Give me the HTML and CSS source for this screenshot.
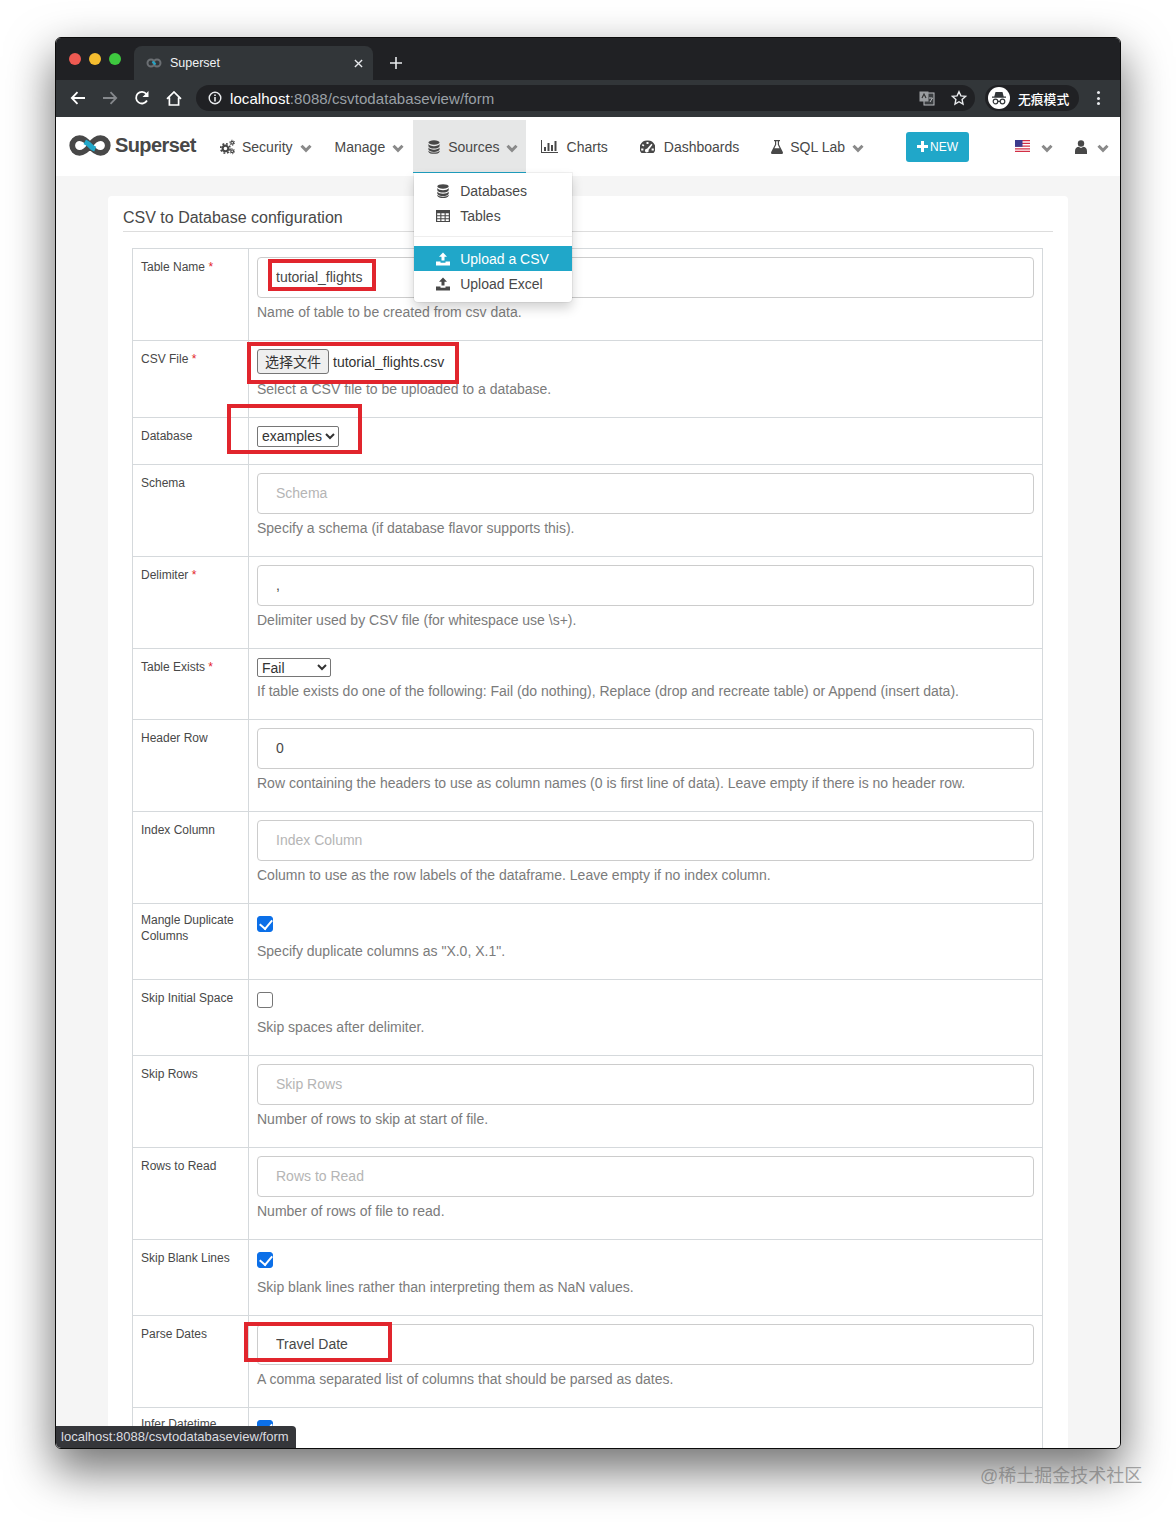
FILE: index.html
```html
<!DOCTYPE html>
<html lang="en">
<head>
<meta charset="utf-8">
<title>Superset</title>
<link rel="stylesheet" href="styles.css">
</head>
<body>
<svg class="defs" aria-hidden="true">
  <symbol id="i-db" viewBox="0 0 14 16"><ellipse cx="7" cy="2.8" rx="6.5" ry="2.6"/><path d="M.5 4.6C1.5 6.4 4 7 7 7s5.500-.6 6.500-2.400V7c-.6 1.800-3.400 2.700-6.500 2.700S1.100 8.800.5 7zM.5 8.700c1 1.800 3.500 2.400 6.500 2.400s5.500-.6 6.500-2.400v2.300c-.6 1.800-3.400 2.700-6.500 2.700S1.100 12.800.5 11z"/><path d="M.5 12.400c1 1.500 3.500 2.100 6.500 2.100s5.500-.6 6.500-2.100v1c-.6 1.700-3.400 2.600-6.500 2.600S1.100 15.100.5 13.400z"/></symbol>
  <symbol id="i-cogs" viewBox="0 0 16 16"><g fill="none" stroke="currentColor"><circle cx="5.800" cy="9.500" r="3" stroke-width="2.200"/><circle cx="5.800" cy="9.500" r="5" stroke-width="1.800" stroke-dasharray="2 1.930"/><circle cx="13" cy="3.500" r="1.500" stroke-width="1.300"/><circle cx="13" cy="3.500" r="2.700" stroke-width="1" stroke-dasharray="1.400 1.430"/><circle cx="13" cy="12.500" r="1.500" stroke-width="1.300"/><circle cx="13" cy="12.500" r="2.700" stroke-width="1" stroke-dasharray="1.400 1.430"/></g></symbol>
  <symbol id="i-chart" viewBox="0 0 17 13"><path d="M0 0h1v12h16v1H0z"/><path d="M3 7h2v4H3zM6.500 3h2v8h-2zM10 5h2v6h-2zM13.500 1h2v10h-2z"/></symbol>
  <symbol id="i-gauge" viewBox="0 0 15 13"><path fill-rule="evenodd" d="M7.500 0a7.500 7.500 0 0 1 6 12.500H1.500A7.500 7.500 0 0 1 7.500 0zM6.500 1.500v2h2v-2zM2.800 3.500l-1 1.300 1.500 1.300 1.100-1.300zM11.400 3.200 7 8.300a1.800 1.800 0 1 0 1.500 1.200l4-5.300zM1.200 8v2h2.200V8zM11.600 8v2h2.200V8z"/></symbol>
  <symbol id="i-flask" viewBox="0 0 12 14"><path d="M3 0h6v1.200H8v3.300l3.800 7.500c.4.900-.1 2-1.200 2H1.400C.3 14-.2 12.900.2 12L4 4.500V1.200H3zM5.200 1.200v3.600L3.400 8.300h5.200L6.800 4.800V1.200z" fill-rule="evenodd"/></symbol>
  <symbol id="i-user" viewBox="0 0 12 14"><circle cx="6" cy="3.500" r="3.200"/><path d="M3.500 6.800 6 8l2.500-1.200C10.800 7.300 12 8.800 12 11.300V14H0v-2.700c0-2.500 1.200-4 3.500-4.500z"/></symbol>
  <symbol id="i-table" viewBox="0 0 14 12"><path fill-rule="evenodd" d="M0 0h14v12H0zM1.200 3.300v2h3.100v-2zM5.400 3.300v2h3.200v-2zM9.700 3.300v2h3.100v-2zM1.200 6.300v2h3.100v-2zM5.400 6.300v2h3.200v-2zM9.700 6.300v2h3.100v-2zM1.200 9.300v1.600h3.100V9.300zM5.400 9.300v1.600h3.200V9.300zM9.700 9.300v1.600h3.100V9.300z"/></symbol>
  <symbol id="i-up" viewBox="0 0 14 13"><path d="M7 0l4 4.200H8.500V8h-3V4.200H3zM0 9h4.500v1.200h5V9H14v4H0z"/></symbol>
  <symbol id="i-chev" viewBox="0 0 12 9"><path d="M1.500 1.800 6 6.300l4.500-4.500" fill="none" stroke="currentColor" stroke-width="3"/></symbol>
</svg>

<div class="window">
  <div class="tabstrip">
    <div class="lights"><span class="light red"></span><span class="light yellow"></span><span class="light green"></span></div>
    <div class="tab">
      <svg class="favicon" viewBox="0 0 16 10"><circle cx="5" cy="5" r="3.500" fill="none" stroke="#6b6f73" stroke-width="2"/><circle cx="11" cy="5" r="3.500" fill="none" stroke="#6b6f73" stroke-width="2"/><path d="M6.500 3.500l3 3" stroke="#20a7c9" stroke-width="2"/></svg>
      <span class="tab-title">Superset</span>
      <svg class="tab-x" viewBox="0 0 10 10"><path d="M1 1l8 8M9 1l-8 8" stroke="#e8eaed" stroke-width="1.500"/></svg>
    </div>
    <svg class="tab-plus" viewBox="0 0 12 12"><path d="M6 0v12M0 6h12" stroke="#e8eaed" stroke-width="1.600"/></svg>
  </div>
  <div class="toolbar">
    <svg class="tb back" viewBox="0 0 16 14"><path d="M15 7H2M7.500 1.200 1.800 7l5.700 5.800" fill="none" stroke="#fff" stroke-width="1.800"/></svg>
    <svg class="tb fwd" viewBox="0 0 16 14"><path d="M1 7h13M8.500 1.200 14.200 7l-5.700 5.800" fill="none" stroke="#85888c" stroke-width="1.800"/></svg>
    <svg class="tb reload" viewBox="0 0 16 16"><path d="M13 10.500A5.800 5.800 0 1 1 12.400 4" fill="none" stroke="#fff" stroke-width="1.800"/><path d="M14.500 1v6h-6z" fill="#fff"/></svg>
    <svg class="tb home" viewBox="0 0 16 15"><path d="M1 7.800 8 1l7 6.800M3.400 6.500V14h9.200V6.500" fill="none" stroke="#fff" stroke-width="1.700"/></svg>
    <div class="omnibox">
      <svg class="info" viewBox="0 0 14 14"><circle cx="7" cy="7" r="5.800" fill="none" stroke="#e8eaed" stroke-width="1.400"/><path d="M6.200 6h1.600v4.500H6.200zM6.200 3.400h1.600v1.500H6.200z" fill="#e8eaed"/></svg>
      <span class="url"><span class="host">localhost</span>:8088/csvtodatabaseview/form</span>
      <svg class="translate" viewBox="0 0 16 15"><rect x="5" y="2" width="10" height="12" fill="#3a3d40" stroke="#b9bcbf"/><rect x="0.500" y="0.500" width="9" height="10" fill="#9a9da0"/><path d="M3 7l2-4 2 4" fill="none" stroke="#333" stroke-width="1.200"/><path d="M10 7h3.500M11 11l2.500-4" fill="none" stroke="#b9bcbf"/></svg>
      <svg class="star" viewBox="0 0 16 16"><path d="M8 1.700l1.900 4.200 4.600.5-3.400 3.100.9 4.500-4-2.300-4 2.300.9-4.500-3.400-3.100 4.600-.5z" fill="none" stroke="#e8eaed" stroke-width="1.400"/></svg>
    </div>
    <div class="incognito">
      <svg class="avatar" viewBox="0 0 22 22"><circle cx="11" cy="11" r="11" fill="#fff"/><path d="M7.500 5h7l1.200 4.500H18v1.200H4V9.500h2.300z" fill="#323639"/><circle cx="7.500" cy="14.500" r="2.300" fill="none" stroke="#323639" stroke-width="1.200"/><circle cx="14.500" cy="14.500" r="2.300" fill="none" stroke="#323639" stroke-width="1.200"/><path d="M9.800 14.300h2.400" stroke="#323639" stroke-width="1.200"/></svg>
      <span class="incog-text">无痕模式</span>
    </div>
    <div class="kebab"><span></span><span></span><span></span></div>
  </div>

  <nav class="navbar">
    <a class="brand">
      <svg class="logo" viewBox="1 0 40 22"><path d="M11 4a7 7 0 1 0 0 14c5 0 8-4 10-7s5-7 10-7a7 7 0 1 1 0 14c-5 0-8-4-10-7S16 4 11 4z" fill="none" stroke="#484848" stroke-width="5.500"/><path d="M16 7.500c1.800 1 3.700 2 5 3.500s3 2.700 5 3.500" fill="none" stroke="#20a7c9" stroke-width="5"/></svg>
      <span class="brand-name">Superset</span>
    </a>
    <a class="nav-item"><svg class="ic w15"><use href="#i-cogs"/></svg><span>Security</span><svg class="chev"><use href="#i-chev"/></svg></a>
    <a class="nav-item manage"><span>Manage</span><svg class="chev"><use href="#i-chev"/></svg></a>
    <div class="nav-item active">
      <svg class="ic w12"><use href="#i-db"/></svg><span class="src-label">Sources</span><svg class="chev"><use href="#i-chev"/></svg>
      <div class="menu">
        <a class="menu-item"><svg class="ic w14"><use href="#i-db"/></svg>Databases</a>
        <a class="menu-item"><svg class="ic w14"><use href="#i-table"/></svg>Tables</a>
        <div class="menu-divider"></div>
        <a class="menu-item on"><svg class="ic w14"><use href="#i-up"/></svg>Upload a CSV</a>
        <a class="menu-item"><svg class="ic w14"><use href="#i-up"/></svg>Upload Excel</a>
      </div>
    </div>
    <a class="nav-item plain charts"><svg class="ic w17"><use href="#i-chart"/></svg><span>Charts</span></a>
    <a class="nav-item plain dash"><svg class="ic w15"><use href="#i-gauge"/></svg><span>Dashboards</span></a>
    <a class="nav-item"><svg class="ic w12"><use href="#i-flask"/></svg><span>SQL Lab</span><svg class="chev"><use href="#i-chev"/></svg></a>
    <div class="nav-right">
      <a class="btn-new"><svg class="plus" viewBox="0 0 11 11"><path d="M5.500 0v11M0 5.500h11" stroke="#fff" stroke-width="3"/></svg>NEW</a>
      <a class="nav-end lang">
        <svg class="flag" viewBox="0 0 15 12"><rect width="15" height="12" fill="#fff"/><path d="M0 0h15v1.300H0zM0 2.800h15v1.300H0zM0 5.500h15v1.300H0zM0 8.200h15v1.300H0zM0 10.800h15V12H0z" fill="#d22f45"/><rect width="7.500" height="6.800" fill="#3c3b8e"/></svg>
        <svg class="chev"><use href="#i-chev"/></svg>
      </a>
      <a class="nav-end user"><svg class="ic w12"><use href="#i-user"/></svg><svg class="chev"><use href="#i-chev"/></svg></a>
    </div>
  </nav>

  <main class="page">
    <section class="card">
      <h1 class="card-title">CSV to Database configuration</h1>
      <div class="form-table">
        <div class="row"><div class="label">Table Name <i>*</i></div><div class="cell"><input class="text" value="tutorial_flights"><p class="help">Name of table to be created from csv data.</p></div></div>
        <div class="row"><div class="label">CSV File <i>*</i></div><div class="cell"><div class="file"><button class="file-btn" type="button">选择文件</button><span>tutorial_flights.csv</span></div><p class="help">Select a CSV file to be uploaded to a database.</p></div></div>
        <div class="row"><div class="label">Database</div><div class="cell bare"><select class="sel db"><option>examples</option></select></div></div>
        <div class="row"><div class="label">Schema</div><div class="cell"><input class="text" placeholder="Schema"><p class="help">Specify a schema (if database flavor supports this).</p></div></div>
        <div class="row"><div class="label">Delimiter <i>*</i></div><div class="cell"><input class="text" value=","><p class="help">Delimiter used by CSV file (for whitespace use \s+).</p></div></div>
        <div class="row"><div class="label">Table Exists <i>*</i></div><div class="cell"><select class="sel exists"><option>Fail</option></select><p class="help tight">If table exists do one of the following: Fail (do nothing), Replace (drop and recreate table) or Append (insert data).</p></div></div>
        <div class="row"><div class="label">Header Row</div><div class="cell"><input class="text" value="0"><p class="help">Row containing the headers to use as column names (0 is first line of data). Leave empty if there is no header row.</p></div></div>
        <div class="row"><div class="label">Index Column</div><div class="cell"><input class="text" placeholder="Index Column"><p class="help">Column to use as the row labels of the dataframe. Leave empty if no index column.</p></div></div>
        <div class="row"><div class="label two">Mangle Duplicate Columns</div><div class="cell"><input class="check" type="checkbox" checked><p class="help">Specify duplicate columns as "X.0, X.1".</p></div></div>
        <div class="row"><div class="label">Skip Initial Space</div><div class="cell"><input class="check" type="checkbox"><p class="help">Skip spaces after delimiter.</p></div></div>
        <div class="row"><div class="label">Skip Rows</div><div class="cell"><input class="text" placeholder="Skip Rows"><p class="help">Number of rows to skip at start of file.</p></div></div>
        <div class="row"><div class="label">Rows to Read</div><div class="cell"><input class="text" placeholder="Rows to Read"><p class="help">Number of rows of file to read.</p></div></div>
        <div class="row"><div class="label">Skip Blank Lines</div><div class="cell"><input class="check" type="checkbox" checked><p class="help">Skip blank lines rather than interpreting them as NaN values.</p></div></div>
        <div class="row"><div class="label">Parse Dates</div><div class="cell"><input class="text" value="Travel Date"><p class="help">A comma separated list of columns that should be parsed as dates.</p></div></div>
        <div class="row"><div class="label two">Infer Datetime</div><div class="cell"><input class="check" type="checkbox" checked></div></div>
      </div>
    </section>
  </main>
  <div class="status">localhost:8088/csvtodatabaseview/form</div>
</div>

<div class="mark m1"></div>
<div class="mark m2"></div>
<div class="mark m3"></div>
<div class="mark m4"></div>
<div class="watermark">@稀土掘金技术社区</div>
</body>
</html>
```

FILE: styles.css
```css
* { box-sizing: border-box; }
html, body { margin: 0; }
body {
  position: relative;
  width: 1176px;
  height: 1522px;
  padding: 37px 55px 0;
  overflow: hidden;
  background: #fff;
  font-family: "Liberation Sans", Arial, "Noto Sans CJK SC", sans-serif;
  font-size: 14px;
  color: #484848;
}
.defs { position: absolute; width: 0; height: 0; }

.window {
  position: relative;
  display: flex;
  flex-direction: column;
  width: 1066px;
  height: 1412px;
  overflow: hidden;
  border: 1px solid #0c0c0c;
  border-radius: 6px;
  box-shadow: 0 20px 46px 2px rgba(0, 0, 0, .55);
  background: #f5f5f5;
}

/* browser chrome */
.tabstrip { display: flex; align-items: flex-end; flex: none; height: 42px; background: #202124; }
.lights { display: flex; gap: 8px; align-self: flex-start; margin: 15px 0 0 13px; width: 65px; }
.light { width: 12px; height: 12px; border-radius: 50%; }
.red { background: #ee5a52; }
.yellow { background: #f5bd2f; }
.green { background: #3ec83f; }
.tab {
  display: flex; align-items: center;
  width: 239px; height: 34px;
  padding: 0 10px 0 12px;
  background: #323639;
  border-radius: 8px 8px 0 0;
}
.favicon { width: 16px; height: 10px; }
.tab-title { margin-left: 8px; font-size: 12.500px; color: #f1f3f4; }
.tab-x { width: 9px; height: 9px; margin-left: auto; }
.tab-plus { width: 12px; height: 12px; margin: 0 0 11px 17px; }
.toolbar { display: flex; align-items: center; flex: none; height: 37px; padding-bottom: 1px; background: #323639; }
.tb { flex: none; }
.back { width: 16px; height: 14px; margin-left: 14px; }
.fwd { width: 16px; height: 14px; margin-left: 16px; }
.reload { width: 16px; height: 16px; margin-left: 16px; }
.home { width: 16px; height: 15px; margin-left: 16px; }
.omnibox {
  display: flex; align-items: center;
  width: 779px; height: 26px;
  margin-left: 14px; padding: 0 8px 0 12px;
  background: #202124; border-radius: 13px;
}
.info { width: 14px; height: 14px; }
.url { margin-left: 8px; font-size: 15px; letter-spacing: .07px; color: #9aa0a6; }
.host { color: #fff; }
.translate { width: 16px; height: 15px; margin-left: auto; margin-right: 16px; }
.star { width: 16px; height: 16px; }
.incognito {
  display: flex; align-items: center;
  width: 94px; height: 26px; margin-left: 10px; padding-left: 3px;
  background: #202124; border-radius: 13px;
}
.avatar { width: 22px; height: 22px; }
.incog-text { margin-left: 8px; font-size: 12.800px; font-weight: 500; color: #fff; }
.kebab { display: flex; flex-direction: column; gap: 2.500px; margin-left: 18px; }
.kebab span { width: 3px; height: 3px; border-radius: 50%; background: #e8eaed; }

/* navbar */
.navbar {
  display: flex; align-items: center; flex: none;
  height: 59px; padding-left: 13px;
  background: #fff;
}
.brand { display: flex; align-items: center; width: 136px; padding-bottom: 2px; }
.logo { width: 42px; height: 23px; }
.brand-name { margin-left: 4px; font-size: 20px; font-weight: 700; letter-spacing: -.6px; color: #484848; }
.nav-item {
  position: relative;
  display: flex; align-items: center; gap: 7px;
  height: 53px; padding: 0 8px 0 15px;
  color: #484848;
  font-size: 14px;
}
.nav-item.manage { padding-right: 9px; }
.nav-item.plain { gap: 9px; padding-right: 15px; }
.nav-item.charts { padding-right: 17px; }
.nav-item.dash { padding-right: 17px; }
.nav-item.active { gap: 6px; background: #e6e7e7; box-shadow: inset 0 -1px 0 #20a7c9; }
.active .src-label { margin-left: 2px; }
.ic { flex: none; height: 16px; fill: #484848; color: #484848; }
.w12 { width: 12px; }
.w14 { width: 14px; height: 14px; }
.w15 { width: 15px; }
.w17 { width: 17px; height: 13px; }
.chev { flex: none; width: 12px; height: 9px; margin-top: 4px; color: #8a8a8a; }

.menu {
  position: absolute; top: 53px; left: 1px; z-index: 3;
  width: 158px; padding: 5px 0 6px;
  background: #fff;
  border-radius: 0 0 4px 4px;
  box-shadow: 0 0 0 1px rgba(0, 0, 0, .05), 0 6px 12px rgba(0, 0, 0, .18);
}
.menu-item { display: flex; align-items: center; gap: 10px; height: 25px; padding-left: 22px; color: #484848; }
.menu-item.on { background: #20a7c9; color: #fff; }
.menu-item.on .ic { fill: #fff; }
.menu-divider { height: 1px; margin: 8px 0 9px; background: #eee; }

.nav-right { display: flex; align-items: center; margin-left: 34px; }
.btn-new {
  display: flex; align-items: center; justify-content: center; gap: 2px;
  width: 63px; height: 30px;
  background: #20a7c9; border-radius: 3px;
  color: #fff; font-size: 12px;
}
.plus { width: 11px; height: 11px; }
.nav-end { display: flex; align-items: center; }
.lang { margin-left: 46px; gap: 11px; }
.user { margin-left: 22px; gap: 10px; }
.flag { width: 15px; height: 12px; margin-top: -2px; }

/* page */
.page { flex: 1; min-height: 0; padding-top: 20px; background: #f5f5f5; }
.card { margin: 0 52px; padding: 0 15px 40px; background: #fff; border-radius: 4px 4px 0 0; }
.card-title {
  height: 36px; margin: 0 0 16px; padding-top: 13px;
  border-bottom: 1px solid #ddd;
  font-size: 16px; font-weight: 400; line-height: 18px; color: #484848;
}
.form-table { margin: 0 10px 0 9px; border: solid #d5d9dc; border-width: 0 1px 1px; }
.row { display: grid; grid-template-columns: 115px 1fr; border-top: 1px solid #d5d9dc; }
.label { padding: 10px 8px 0; font-size: 12px; line-height: 16px; color: #484848; }
.label.two { padding-top: 8px; }
.label i { font-style: normal; color: #e3242b; }
.cell { padding: 8px; border-left: 1px solid #d5d9dc; }
.cell.bare { padding-bottom: 17px; }
.text {
  display: block; width: 100%; height: 41px; padding: 0 18px 2px;
  border: 1px solid #ccc; border-radius: 4px;
  background: #fff; font: inherit; color: #484848;
}
.text::placeholder { color: #b5b5b5; opacity: 1; }
.help { margin: 5px 0 10px; line-height: 20px; color: #7b7b7b; }
.text + .help { margin-top: 4px; }
.help.tight { margin-top: 4px; }
.file { display: flex; align-items: center; height: 25px; gap: 4px; color: #333; }
.file-btn {
  width: 72px; height: 25px; padding: 0 0 2px;
  background: #efefef; border: 1px solid #767676; border-radius: 3px;
  font: inherit; color: #333;
}
.sel { display: block; padding-bottom: 2px; font: inherit; color: #333; background: #fff; border: 1px solid #767676; border-radius: 2px; }
.sel.db { width: 82px; height: 21px; }
.sel.exists { width: 74px; height: 19px; margin-top: 1px; }
.check {
  position: relative; display: block;
  width: 16px; height: 16px; margin: 4px 0 9px;
  appearance: none;
  background: #fff; border: 1px solid #767676; border-radius: 3px;
}
.check:checked { background: #0b6fe8; border-color: #0b6fe8; }
.check:checked::after {
  content: ""; position: absolute; left: 4px; top: 0;
  width: 6px; height: 10px;
  border: solid #fff; border-width: 0 2.500px 2.500px 0;
  transform: rotate(40deg);
}

.status {
  position: absolute; left: 0; bottom: 0; z-index: 4;
  width: 240px; height: 22px; padding: 0 0 0 5px;
  background: #35363a; border-radius: 0 4px 0 0;
  font-size: 13px; line-height: 21px; letter-spacing: .02px; color: #dcdde0; white-space: nowrap;
}

/* annotations drawn over the screenshot */
.mark { position: absolute; z-index: 5; border: 4px solid #e1252d; }
.m1 { left: 268px; top: 259px; width: 108px; height: 32px; }
.m2 { left: 247px; top: 342px; width: 212px; height: 42px; }
.m3 { left: 227px; top: 404px; width: 135px; height: 50px; }
.m4 { left: 244px; top: 1322px; width: 148px; height: 40px; }
.watermark {
  position: absolute; left: 980px; top: 1465px;
  font-size: 18px; line-height: 22px; color: rgba(110, 110, 110, .62); white-space: nowrap;
}
```
